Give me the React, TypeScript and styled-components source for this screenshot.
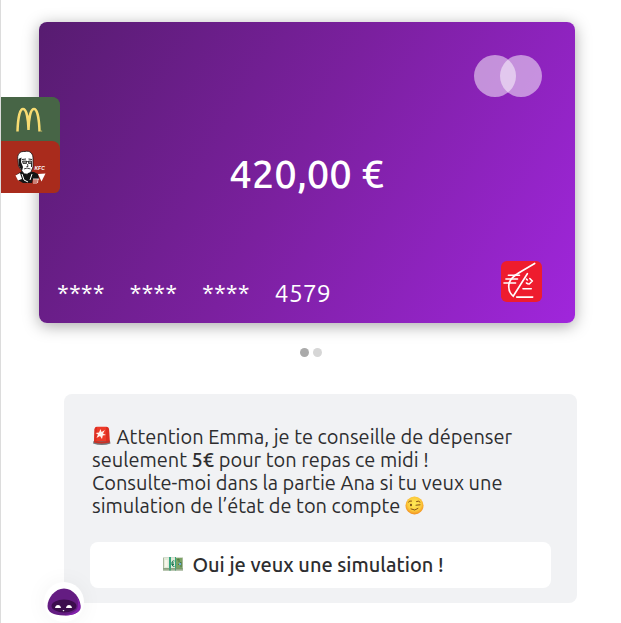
import React from "react";
import styled, { createGlobalStyle } from "styled-components";

const GlobalStyle = createGlobalStyle`
  *, *::before, *::after { box-sizing: border-box; }
  body {
    margin: 0;
    background: #ffffff;
    color: #2d2d2f;
    font-family: Ubuntu, "Noto Sans", "Open Sans", sans-serif;
  }
`;

const Screen = styled.main`
  position: relative;
  display: flex;
  flex-direction: column;
  min-height: 100vh;
  padding: 22px 44px 20px 38px;
  border-left: 1px solid #dcdcdc;
  overflow: hidden;
`;

const BankCard = styled.section`
  display: flex;
  flex-direction: column;
  justify-content: space-between;
  margin-right: 2px;
  padding: 33px 33px 21px 18px;
  height: 301px;
  border-radius: 8px;
  color: #ffffff;
  background: linear-gradient(120deg, #571c70 0%, #7b209f 48%, #a026dc 100%);
  box-shadow: 0 3px 16px rgba(0, 0, 0, 0.34);
`;

const Network = styled.div`
  display: flex;
  justify-content: flex-end;
`;

const Disc = styled.span<{ $overlap?: boolean }>`
  width: 42px;
  height: 42px;
  margin-left: ${({ $overlap }) => ($overlap ? "-16px" : "0")};
  border-radius: 50%;
  background: rgba(255, 255, 255, 0.5);
`;

const Amount = styled.p`
  margin: 0 0 10px;
  padding-left: 14px;
  font-size: 40px;
  font-weight: 500;
  line-height: 48px;
  text-align: center;
`;

const CardFooter = styled.div`
  display: flex;
  align-items: flex-end;
  justify-content: space-between;
`;

const CardNumber = styled.div`
  display: flex;
  gap: 25px;
  font-size: 25px;
  line-height: 18px;
`;

const Dots = styled.nav`
  display: flex;
  justify-content: center;
  gap: 4px;
  margin-top: 25px;
  padding-left: 6px;
`;

const Dot = styled.button<{ $active?: boolean }>`
  width: 9px;
  height: 9px;
  padding: 0;
  border: 0;
  border-radius: 50%;
  background: ${({ $active }) => ($active ? "#aaaaaa" : "#d6d6d6")};
`;

const Advice = styled.section`
  margin: 37px 0 0 25px;
  padding: 31px 26px 15px;
  border-radius: 8px;
  background: #f1f2f4;
`;

const Message = styled.p`
  margin: 0 0 25px;
  padding-left: 2px;
  font-size: 20px;
  line-height: 23px;
  white-space: nowrap;

  strong { font-weight: 500; }
  svg { vertical-align: -2px; }
`;

const Action = styled.button`
  display: flex;
  align-items: center;
  justify-content: center;
  gap: 9px;
  width: 100%;
  height: 46px;
  padding: 0 34px 2px 0;
  border: 0;
  border-radius: 8px;
  background: #ffffff;
  color: #2d2d2f;
  font: inherit;
  font-size: 20px;
  font-weight: 500;
  white-space: nowrap;
`;

const Shops = styled.aside`
  position: absolute;
  top: 97px;
  left: 0;
  display: flex;
  flex-direction: column;
  width: 59px;
  border-radius: 0 8px 6px 0;
  background: #476546;
  overflow: hidden;
`;

const Shop = styled.a<{ $color: string; $height: number }>`
  display: flex;
  height: ${({ $height }) => $height}px;
  border-radius: 0 8px 0 0;
  background: ${({ $color }) => $color};
`;

const Assistant = styled.button`
  position: absolute;
  left: 43px;
  top: 582px;
  display: flex;
  align-items: center;
  justify-content: center;
  width: 40px;
  height: 40px;
  padding: 0;
  border: 0;
  border-radius: 50%;
  background: #ffffff;
  box-shadow: 0 0 22px rgba(0, 0, 0, 0.05);
`;

const Arches = () => (
  <svg width="59" height="44" viewBox="0 0 59 44" fill="none" aria-hidden="true">
    <path d="M16.500 34.500C16.800 23 18.500 12 22 12C25.500 12 27.300 22 27.500 33C27.700 22 29.500 12 33 12C36.500 12 38.200 23 38.500 34.500" stroke="#f8dc72" strokeWidth="2.500" />
    <circle cx="40.700" cy="34" r=".5" fill="#f8dc72" />
  </svg>
);

const Colonel = () => (
  <svg width="59" height="52" viewBox="0 0 59 52" aria-hidden="true">
    <path d="M15 34L21 30L33 31L37 33L38 38L32 38L31 42L22 42L17 39Z" fill="#141414" />
    <path d="M14.500 34.500L19 32L21 38L17 39.500Z" fill="#fff" />
    <path d="M37 33L44.500 32.500L40.500 40.500Z" fill="#fff" />
    <path d="M17 20C15.500 13 19 10 24 10.500C29 9 32.500 13 32 18L32 26L30 31L25 35L20 29L17.500 25Z" fill="#fff" stroke="#141414" strokeWidth=".8" />
    <path d="M17.500 18L18 25L21 30L22 26L20 21L20.500 16.500Z" fill="#141414" />
    <path d="M21 18.500L25 18M27.500 18L31 18.500M30.500 22V26" fill="none" stroke="#141414" strokeWidth=".9" />
    <path d="M21.500 20H25.500V22.500H22ZM27.500 20H30.500V22.500H27.500ZM25.500 20.500H27.500" fill="#8c8c88" stroke="#141414" strokeWidth=".7" />
    <path d="M26.500 23L27 25.500H25.500M23 28L26 27L29.500 28" fill="none" stroke="#141414" strokeWidth=".8" />
    <path d="M21 33L25 32.500L29 31.500L31 33L28 37L25.500 34.500L22 37Z" fill="#141414" />
    <path d="M23.500 28.500L28.500 28.500L26 33.500Z" fill="#fff" />
    <path d="M21 33L23 39L27 41M31 33L29 39" fill="none" stroke="#fff" strokeWidth="1" />
    <path d="M32 38H38M33 38.500V43M35 38.500V43M37 38L36.500 42" stroke="#fff" strokeWidth=".8" />
    <text x="33.500" y="28.500" fill="#fff" fontFamily="Liberation Sans, sans-serif" fontSize="5" fontWeight="700" fontStyle="italic">KFC</text>
  </svg>
);

const BankLogo = () => (
  <svg width="41" height="41" viewBox="0 0 42 42" fill="none" stroke="#fff" strokeLinecap="round" role="img" aria-label="Banque">
    <rect width="42" height="42" rx="6" fill="#ee1c2e" stroke="none" />
    <path d="M34.500 2.500L21 10.500C15 14 10 17 8.500 22C7 28 9 33 12.500 36L27 13" strokeWidth="1.700" />
    <path d="M7.500 14.500H19M5 18.500H17M3 22.500H15" strokeWidth="1.500" />
    <path d="M26 18.500L27 19.500M29.500 18L32 20.500L29 23.500M26 22.500L28 23.500M22.500 28.500H31M16 37H32.500" strokeWidth="1.600" />
  </svg>
);

const Siren = () => (
  <svg width="20" height="20" viewBox="0 0 20 20" aria-hidden="true">
    <path d="M2 15L2.500 3Q3 .7 5 .7H14Q16.500 .7 17 3L17.700 15Z" fill="#ed3a28" />
    <path d="M2 15L2.500 3Q3 .7 5 .7L4.500 14ZM14 .7Q16.500 .7 17 3L17.700 15H14Z" fill="#d1261e" opacity=".6" />
    <path d="M1.500 15H18L18.500 17.500Q10 20.500 1 17.500Z" fill="#77777b" />
    <path d="M2 14.500Q9 16.500 17.700 14.500V16.500Q9 18.500 2 16.500Z" fill="#c93024" />
    <path d="M8.500 3L9.500 6L13 4L11 7.500L14 9L10.800 9.500L10 13L8 10L4.500 12L6 8.500L3.500 7L7 6.500Z" fill="#fff2ed" />
  </svg>
);

const Wink = () => (
  <svg width="19" height="19" viewBox="0 0 19 19" fill="none" aria-hidden="true">
    <defs>
      <radialGradient id="wink-skin" cx=".5" cy=".42" r=".58">
        <stop offset="0" stopColor="#ffec59" />
        <stop offset=".65" stopColor="#fccb3c" />
        <stop offset="1" stopColor="#f18c1f" />
      </radialGradient>
    </defs>
    <circle cx="9.500" cy="9.500" r="9" fill="url(#wink-skin)" />
    <ellipse cx="6" cy="9" rx=".9" ry="1.300" fill="#653910" />
    <path d="M3.500 6Q4.500 4.500 6.500 5M11.500 5.500Q13.500 4.300 15 6M11 9.200L15 8.800M6 13Q10 15.500 13 12.500" stroke="#75410f" strokeWidth=".9" strokeLinecap="round" />
  </svg>
);

const Banknotes = () => (
  <svg width="20" height="14" viewBox="0 0 20 14" aria-hidden="true">
    <path d="M0 .5H20V13.500H0Z" fill="#a8b99c" />
    <path d="M1 1H19V11H1Z" fill="#e2ead9" />
    <path d="M12 1H19V12H12Z" fill="#7ba365" />
    <path d="M6 0H8V13.500H6ZM12 0H13V13.500H12Z" fill="#35a67d" />
    <path d="M2 3H4.500V10H2Z" fill="#f8f6e9" />
    <path d="M11.500 4Q9 3 9 6.500T11.500 9.500M8.500 6H11M8.500 7.500H11" fill="none" stroke="#207953" strokeWidth="1" />
    <path d="M14 3L16 2V5M15 8L18 5V10" fill="none" stroke="#4b7847" />
    <path d="M16 6H18V8H16Z" fill="#6dabd2" />
    <path d="M0 11.500H20M0 13H20" stroke="#789471" strokeWidth=".6" />
  </svg>
);

const Mascot = () => (
  <svg width="34" height="28" viewBox="0 0 34 28" aria-hidden="true">
    <path d="M17 .5C8 .5 .5 10 .5 18C.5 24 6 27.500 17 27.500S33.500 24 33.500 18C33.500 10 26 .5 17 .5Z" fill="#641c82" />
    <path d="M30 9Q35 18 33 22Q29 27.500 17 27.500Q29 25 30.500 20Q31.500 15 30 9Z" fill="#8421ae" />
    <ellipse cx="17" cy="18" rx="12.500" ry="6.500" fill="#3c0d4d" />
    <path d="M8 20Q8.500 17 11 17T14 20ZM19 20Q19.500 17 22 17T25 20Z" fill="#fff" />
    <path d="M15.500 22H17.500L16.500 23.500Z" fill="#eee" />
  </svg>
);

export default function App() {
  return (
    <>
      <GlobalStyle />
      <Screen>
        <BankCard aria-label="Carte bancaire">
          <Network>
            <Disc />
            <Disc $overlap />
          </Network>
          <Amount>420,00 €</Amount>
          <CardFooter>
            <CardNumber>
              <span>****</span>
              <span>****</span>
              <span>****</span>
              <span>4579</span>
            </CardNumber>
            <BankLogo />
          </CardFooter>
        </BankCard>
        <Dots aria-label="Cartes">
          <Dot $active aria-label="Carte 1" />
          <Dot aria-label="Carte 2" />
        </Dots>
        <Advice>
          <Message>
            <Siren /> Attention Emma, je te conseille de dépenser
            <br />
            seulement <strong>5€</strong> pour ton repas ce midi !
            <br />
            Consulte-moi dans la partie Ana si tu veux une
            <br />
            simulation de l’état de ton compte <Wink />
          </Message>
          <Action>
            <Banknotes />
            Oui je veux une simulation !
          </Action>
        </Advice>
        <Shops>
          <Shop href="#mcdonalds" aria-label="McDonald's" $color="#476546" $height={44}>
            <Arches />
          </Shop>
          <Shop href="#kfc" aria-label="KFC" $color="#a92b1c" $height={52}>
            <Colonel />
          </Shop>
        </Shops>
        <Assistant aria-label="Ana">
          <Mascot />
        </Assistant>
      </Screen>
    </>
  );
}
